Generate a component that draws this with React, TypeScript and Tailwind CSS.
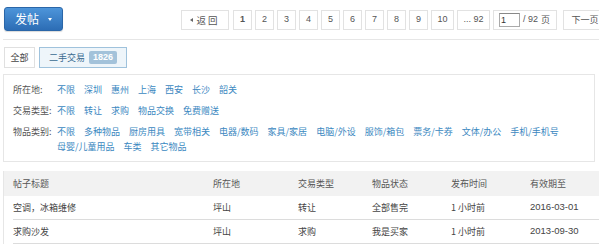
const CJK = "font-['Microsoft_YaHei','Noto_Sans_CJK_SC',sans-serif]";

const filters: { label: string; items: string[] }[] = [
  { label: "所在地:", items: ["不限", "深圳", "惠州", "上海", "西安", "长沙", "韶关"] },
  { label: "交易类型:", items: ["不限", "转让", "求购", "物品交换", "免费赠送"] },
  {
    label: "物品类别:",
    items: [
      "不限", "多种物品", "厨房用具", "宽带相关", "电器/数码", "家具/家居", "电脑/外设",
      "服饰/箱包", "票务/卡券", "文体/办公", "手机/手机号", "母婴/儿童用品", "车类", "其它物品",
    ],
  },
];

const rows = [
  { title: "空调，冰箱维修", place: "坪山", type: "转让", state: "全部售完", time: "1 小时前", until: "2016-03-01" },
  { title: "求购沙发", place: "坪山", type: "求购", state: "我是买家", time: "1 小时前", until: "2013-09-30" },
];

function PageBox({ children, className = "" }: { children: React.ReactNode; className?: string }) {
  return (
    <div
      className={`h-[20px] shrink-0 flex items-center justify-center border border-[#e2e2e2] bg-white text-[9px] text-[#555] ${className}`}
    >
      {children}
    </div>
  );
}

export default function App() {
  const pages = ["2", "3", "4", "5", "6", "7", "8", "9"];
  return (
    <div className={`w-[599px] h-[250px] overflow-hidden bg-white text-[9px] text-[#555] ${CJK}`}>
      {/* Top bar */}
      <div className="ml-[3px] h-[40px] border-b border-[#e6e6e6] flex items-start">
        <button className="mt-[7px] ml-[1px] w-[59px] h-[24px] shrink-0 rounded-[3px] border border-[#2a66a8] bg-gradient-to-b from-[#4d95da] to-[#2c6db5] text-white flex items-center justify-center gap-[9px] shadow-[0_1px_1px_rgba(0,0,0,0.15)]">
          <span className="text-[12px] leading-none">发帖</span>
          <span className="w-0 h-0 border-l-[2.5px] border-r-[2.5px] border-t-[3px] border-l-transparent border-r-transparent border-t-white mt-[1px]" />
        </button>
        <div className="mt-[10px] ml-[118px] flex gap-[3px] shrink-0">
          <PageBox className="w-[48px] gap-[3px]">
            <span className="w-0 h-0 border-t-[2.5px] border-b-[2.5px] border-r-[3px] border-t-transparent border-b-transparent border-r-[#666]" />
            <span className="text-[9.5px] tracking-[2px]">返回</span>
          </PageBox>
          <PageBox className="w-[19px] ml-[1px] bg-[#ececec] font-bold text-[#444] font-['Liberation_Sans',sans-serif]">1</PageBox>
          {pages.map((p) => (
            <PageBox key={p} className="w-[19px] font-['Liberation_Sans',sans-serif]">
              {p}
            </PageBox>
          ))}
          <PageBox className="w-[23px] font-['Liberation_Sans',sans-serif]">10</PageBox>
          <PageBox className="w-[33px] font-['Liberation_Sans',sans-serif]">... 92</PageBox>
          <PageBox className="w-[64px] justify-start pl-[5px] gap-[3px]">
            <div className="w-[21px] h-[14px] border border-[#aaa] border-t-[#888] bg-white text-[9px] leading-[12px] pl-[1px] text-[#333] font-['Liberation_Sans',sans-serif]">
              1
            </div>
            <span className="font-['Liberation_Sans',sans-serif]">/ 92</span>
            <span>页</span>
          </PageBox>
          <PageBox className="w-[44px] ml-[3px]">下一页</PageBox>
        </div>
      </div>

      {/* Tabs */}
      <div className="ml-[4px] mt-[7px] flex gap-[4px] h-[21px]">
        <div className="w-[31px] border border-[#e0e0e0] flex items-center justify-center text-[#444]">全部</div>
        <div className="w-[88px] border border-[#9fc2dc] bg-[#eef5fa] flex items-center justify-center gap-[4px] text-[#3a6b91]">
          <span>二手交易</span>
          <span className="px-[4px] h-[13px] rounded-[2px] bg-[#a3c2da] text-white font-bold text-[9px] leading-[13px] font-['Liberation_Sans',sans-serif]">
            1826
          </span>
        </div>
      </div>

      {/* Filters */}
      <div className="ml-[3px] mr-[4px] mt-[6px] border border-[#e6e6e6] pt-[4px] pb-[4px]">
        {filters.map((f) => (
          <div key={f.label} className="flex py-[3px] leading-[15px]">
            <div className="w-[53px] shrink-0 pl-[9px] text-[#555]">{f.label}</div>
            <div className="flex flex-wrap gap-x-[9px] text-[#3b88bf]">
              {f.items.map((it) => (
                <span key={it} className="whitespace-nowrap">
                  {it}
                </span>
              ))}
            </div>
          </div>
        ))}
      </div>

      {/* Table */}
      <div className="ml-[3px] mt-[9px] border-l border-[#e6e6e6]">
        <div className="h-[25px] bg-[#f2f2f2] grid grid-cols-[200px_85px_74px_79px_79px_1fr] items-center pl-[9px]">
          <span>帖子标题</span>
          <span>所在地</span>
          <span>交易类型</span>
          <span>物品状态</span>
          <span>发布时间</span>
          <span>有效期至</span>
        </div>
        {rows.map((r) => (
          <div
            key={r.title}
            className="ml-[9px] h-[24px] border-b border-[#dcdcdc] grid grid-cols-[200px_85px_74px_79px_79px_1fr] items-center text-[#444]"
          >
            <span>{r.title}</span>
            <span>{r.place}</span>
            <span>{r.type}</span>
            <span>{r.state}</span>
            <span>{r.time}</span>
            <span className="font-['Liberation_Sans',sans-serif] text-[9.5px]">{r.until}</span>
          </div>
        ))}
      </div>
    </div>
  );
}
